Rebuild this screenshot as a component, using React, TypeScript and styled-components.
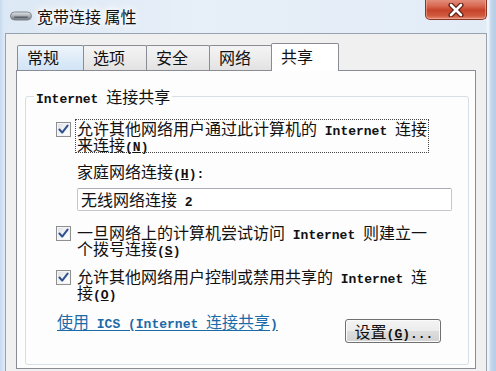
import React from 'react'
import styled, { createGlobalStyle } from 'styled-components'

const GlobalStyle = createGlobalStyle`
  html, body {
    margin: 0;
    padding: 0;
  }

  body {
    width: 496px;
    height: 371px;
    overflow: hidden;
    font-family: "Noto Sans CJK SC", "Noto Sans", sans-serif;
    color: #111;
  }
`

const Window = styled.div`
  width: 496px;
  height: 371px;
  overflow: hidden;
  display: flex;
  flex-direction: column;
  background: linear-gradient(
    to right,
    #c6daee 0,
    #dce8f5 4px,
    #e7eff8 40%,
    #e2ecf7 486px,
    #f4f8fc 488px,
    #c3d7ec 491px,
    #b5cde7 496px
  );
`

const TitleBar = styled.div`
  height: 33px;
  display: flex;
  align-items: flex-start;
  flex-shrink: 0;
`

const TitleIcon = styled.svg`
  margin: 11px 0 0 10px;
  flex-shrink: 0;
`

const Title = styled.div`
  margin-left: 5px;
  font-size: 16px;
  line-height: 32px;
  color: #111;
  text-shadow: 0 0 6px #fff, 0 0 10px #fff, 0 0 14px #fff;
`

const CloseButton = styled.div`
  margin: -3px 9px 0 auto;
  width: 62px;
  height: 23px;
  box-sizing: border-box;
  border: 1px solid #8a3426;
  border-top: none;
  border-radius: 0 0 5px 5px;
  background: linear-gradient(
    to bottom,
    #e6a090 0,
    #d86a52 40%,
    #c6432b 60%,
    #cf5a40 85%,
    #e48a6f 100%
  );
  box-shadow: inset 0 0 0 1px rgba(255, 200, 180, 0.45);
  display: flex;
  align-items: center;
  justify-content: center;
  padding-top: 3px;
`

const Body = styled.div`
  flex: 1;
  min-height: 0;
  margin: 0 9px 0 5px;
  border: 1px solid #97a3b0;
  border-bottom: none;
  background: #f0f0f0;
  display: flex;
  flex-direction: column;
  padding: 9px 10px 2px 10px;
`

const TabStrip = styled.div`
  height: 27px;
  display: flex;
  align-items: flex-end;
  padding-left: 1px;
  flex-shrink: 0;
`

interface TabProps {
  $w: number
  $active?: boolean
  $hover?: boolean
}

const Tab = styled.div<TabProps>`
  width: ${p => p.$w}px;
  height: ${p => (p.$active ? 28 : 25)}px;
  box-sizing: border-box;
  margin-left: -1px;
  margin-bottom: ${p => (p.$active ? -1 : 0)}px;
  position: relative;
  z-index: ${p => (p.$active ? 2 : 1)};
  border: 1px solid #898c95;
  border-bottom: none;
  border-radius: 2px 2px 0 0;
  padding: ${p => (p.$active ? 2 : 1)}px 0 0 9px;
  font-size: 16px;
  line-height: 21px;
  color: #111;
  background: ${p =>
    p.$active
      ? '#ffffff'
      : p.$hover
      ? 'linear-gradient(to bottom, #eef5fc 0, #dfecf8 50%, #d2e4f5 100%)'
      : 'linear-gradient(to bottom, #f4f4f4 0, #ececec 50%, #e2e2e2 100%)'};

  &:first-child {
    margin-left: 0;
  }
`

const Panel = styled.div`
  flex: 1;
  min-height: 0;
  display: flex;
  flex-direction: column;
  background: #fdfdfd;
  border: 1px solid #898c95;
  padding: 17px 6px 3px 8px;
`

const Group = styled.fieldset`
  flex: 1;
  min-width: 0;
  margin: 0;
  padding: 0;
  border: 1px solid #d5dfe5;
  border-radius: 3px;
`

const GroupTitle = styled.legend`
  margin-left: 8px;
  padding: 0 2px;
  font-size: 16px;
  line-height: 16px;
`

const Latin = styled.span`
  font-family: "Liberation Mono", "Courier New", monospace;
  font-size: 13px;
  font-weight: bold;
  line-height: 0;
  white-space: pre;
`

const Option = styled.div<{ $top: number }>`
  display: flex;
  align-items: flex-start;
  margin: ${p => p.$top}px 0 0 30px;
`

const Box = styled.span`
  width: 15px;
  height: 15px;
  box-sizing: border-box;
  margin: 3px 4px 0 0;
  flex-shrink: 0;
  border: 1px solid #8e8f8f;
  background: linear-gradient(135deg, #dcdfe3 0, #f6f7f8 60%, #ffffff 100%);
  box-shadow: inset 0 0 0 1px #f4f4f4;
  display: flex;
  align-items: center;
  justify-content: center;
`

const OptionText = styled.div<{ $focus?: boolean }>`
  border: 1px dotted ${p => (p.$focus ? '#444' : 'transparent')};
  padding: 0 1px;
  font-size: 16px;
  line-height: 16px;
  white-space: nowrap;
`

const FieldLabel = styled.div`
  margin: 10px 0 0 51px;
  font-size: 16px;
  line-height: 16px;
  white-space: nowrap;
`

const TextBox = styled.div`
  margin: 9px 0 0 51px;
  width: 375px;
  height: 23px;
  box-sizing: border-box;
  border: 1px solid #c3c7cd;
  border-top-color: #abadb3;
  border-radius: 2px;
  background: #fff;
  padding-left: 3px;
  font-size: 16px;
  line-height: 21px;
  white-space: nowrap;
`

const Footer = styled.div`
  margin-top: 12px;
  display: flex;
  align-items: flex-start;
  justify-content: space-between;
  padding: 0 27px 0 31px;
`

const Link = styled.a`
  font-size: 16px;
  line-height: 16px;
  color: #1d6aa8;
  text-decoration: underline;
  text-underline-offset: 2px;
  white-space: nowrap;
  cursor: pointer;
`

const Button = styled.button`
  margin-top: 6px;
  width: 96px;
  height: 24px;
  box-sizing: border-box;
  border: 1px solid #707070;
  border-radius: 3px;
  background: linear-gradient(
    to bottom,
    #f4f4f4 0,
    #ececec 48%,
    #dddddd 52%,
    #d2d2d2 100%
  );
  box-shadow: inset 0 0 0 1px #fbfbfb;
  padding: 0 0 0 2px;
  font-family: "Noto Sans CJK SC", "Noto Sans", sans-serif;
  font-size: 16px;
  line-height: 20px;
  color: #111;
  white-space: nowrap;
`

const Check = () => (
  <Box>
    <svg width="11" height="11" viewBox="0 0 11 11">
      <path
        d="M1.5 5.5 L4.2 8.6 L9.6 1.6"
        fill="none"
        stroke="#2f4f8e"
        strokeWidth="2"
        strokeLinecap="round"
        strokeLinejoin="round"
      />
    </svg>
  </Box>
)

const tabs = [
  { label: '常规', w: 67, hover: true },
  { label: '选项', w: 64 },
  { label: '安全', w: 64 },
  { label: '网络', w: 63 },
  { label: '共享', w: 68, active: true },
]

export default function App() {
  return (
    <Window>
      <GlobalStyle />
      <TitleBar>
        <TitleIcon width="22" height="10" viewBox="0 0 22 10">
          <defs>
            <linearGradient id="modem" x1="0" y1="0" x2="0" y2="1">
              <stop offset="0" stopColor="#e4e7ea" />
              <stop offset="0.5" stopColor="#a9afb6" />
              <stop offset="1" stopColor="#6d737b" />
            </linearGradient>
          </defs>
          <rect x="0.5" y="1" width="21" height="8" rx="4" fill="url(#modem)" stroke="#80868e" />
          <rect x="4" y="5.5" width="14" height="1.5" rx="0.7" fill="#5b6169" />
        </TitleIcon>
        <Title>宽带连接 属性</Title>
        <CloseButton>
          <svg width="20" height="14" viewBox="0 0 20 14">
            <path d="M5 2 L15 12 M15 2 L5 12" stroke="#5c1c12" strokeWidth="5" strokeLinecap="round" />
            <path d="M5 2 L15 12 M15 2 L5 12" stroke="#ffffff" strokeWidth="2.6" strokeLinecap="round" />
          </svg>
        </CloseButton>
      </TitleBar>

      <Body>
        <TabStrip>
          {tabs.map(t => (
            <Tab key={t.label} $w={t.w} $active={t.active} $hover={t.hover}>
              {t.label}
            </Tab>
          ))}
        </TabStrip>

        <Panel>
          <Group>
            <GroupTitle>
              <Latin>Internet </Latin>连接共享
            </GroupTitle>

            <Option $top={15}>
              <Check />
              <OptionText $focus>
                允许其他网络用户通过此计算机的<Latin> Internet </Latin>连接
                <br />
                来连接<Latin>
                  (<u>N</u>)
                </Latin>
              </OptionText>
            </Option>

            <FieldLabel>
              家庭网络连接<Latin>
                (<u>H</u>):
              </Latin>
            </FieldLabel>
            <TextBox>
              无线网络连接<Latin> 2</Latin>
            </TextBox>

            <Option $top={12}>
              <Check />
              <OptionText>
                一旦网络上的计算机尝试访问<Latin> Internet </Latin>则建立一
                <br />
                个拨号连接<Latin>
                  (<u>S</u>)
                </Latin>
              </OptionText>
            </Option>

            <Option $top={10}>
              <Check />
              <OptionText>
                允许其他网络用户控制或禁用共享的<Latin> Internet </Latin>连
                <br />
                接<Latin>
                  (<u>O</u>)
                </Latin>
              </OptionText>
            </Option>

            <Footer>
              <Link>
                使用<Latin> ICS (Internet </Latin>连接共享<Latin>)</Latin>
              </Link>
              <Button>
                设置<Latin>
                  (<u>G</u>)...
                </Latin>
              </Button>
            </Footer>
          </Group>
        </Panel>
      </Body>
    </Window>
  )
}
